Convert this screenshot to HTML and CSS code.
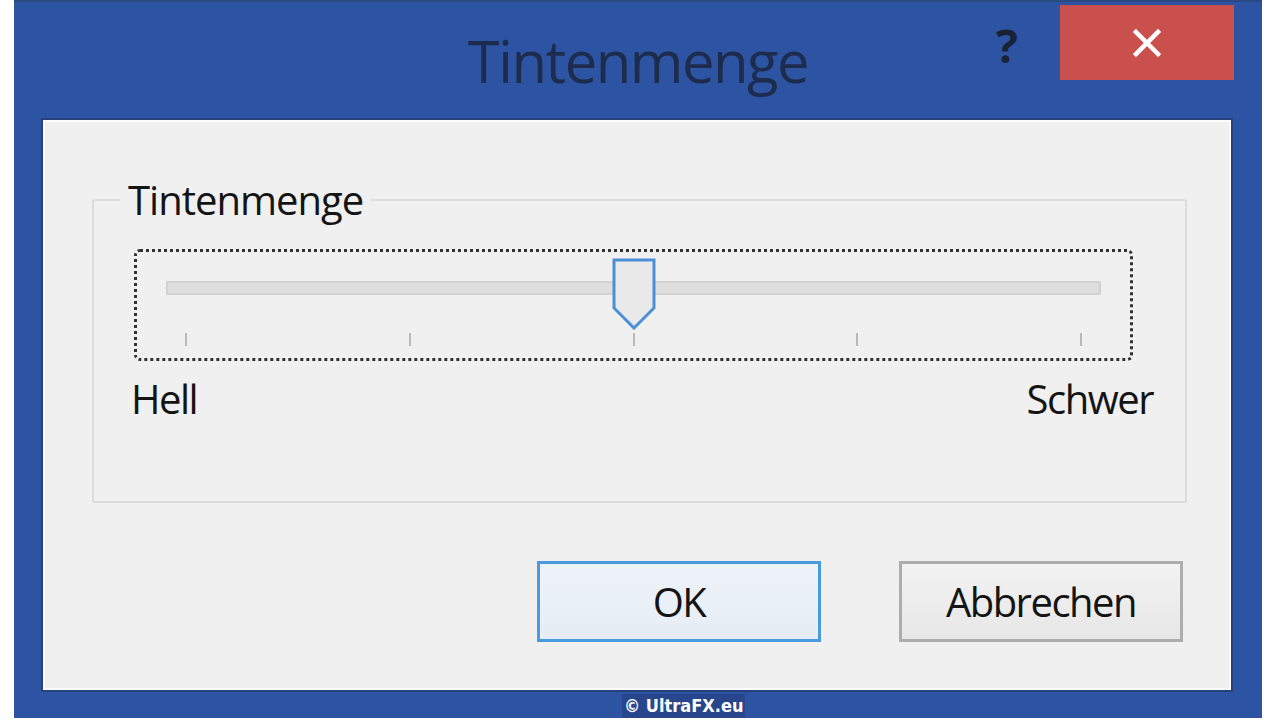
FILE: index.html
```html
<!DOCTYPE html>
<html lang="de">
<head>
<meta charset="utf-8">
<title>Tintenmenge</title>
<link rel="stylesheet" href="styles.css">
</head>
<body>
<div class="window">
  <div class="titlebar">
    <div class="tb-side"></div>
    <div class="title">Tintenmenge</div>
    <div class="tb-side tb-right">
      <span class="help">?</span>
      <div class="close">
        <svg width="34" height="34" viewBox="0 0 34 34"><path d="M6 6 L28 28 M28 6 L6 28" stroke="#fff" stroke-width="4.5" stroke-linecap="square"/></svg>
      </div>
    </div>
  </div>
  <div class="client">
    <fieldset class="group">
      <legend class="legend">Tintenmenge</legend>
      <div class="slider">
        <div class="track-row">
          <div class="track"></div>
          <svg class="thumb" width="44" height="72" viewBox="0 0 44 72"><path d="M2 2 H42 V50 L22 70 L2 50 Z" fill="#e9e9e9" stroke="#4a8fd8" stroke-width="3" stroke-linejoin="miter"/></svg>
        </div>
        <div class="ticks">
          <span class="tick"></span><span class="tick"></span><span class="tick"></span><span class="tick"></span><span class="tick"></span>
        </div>
      </div>
      <div class="scale-labels">
        <span>Hell</span>
        <span>Schwer</span>
      </div>
    </fieldset>
    <div class="buttons">
      <button class="btn btn-default">OK</button>
      <button class="btn">Abbrechen</button>
    </div>
  </div>
  <div class="bottom-strip">
    <span class="watermark">© UltraFX.eu</span>
  </div>
</div>
</body>
</html>
```
FILE: styles.css
```css
html, body {
  margin: 0;
  padding: 0;
  background: #ffffff;
  width: 1280px;
  height: 720px;
  overflow: hidden;
}
body {
  font-family: "Open Sans", "Noto Sans", sans-serif;
}
.window {
  margin-left: 14px;
  width: 1248px;
  height: 718px;
  background: #2d54a3;
  border-top: 2px solid #2a4882;
  box-sizing: border-box;
  display: flex;
  flex-direction: column;
}
.titlebar {
  height: 118px;
  flex: none;
  display: grid;
  grid-template-columns: 1fr auto 1fr;
  align-items: start;
}
.title {
  font-size: 58px;
  line-height: 1;
  color: #1d2b4d;
  margin-top: 30px;
  letter-spacing: -1.5px;
}
.tb-right {
  display: flex;
  justify-content: flex-end;
  align-items: flex-start;
  padding-right: 28px;
}
.help {
  font-size: 46px;
  font-weight: 700;
  color: #1a2236;
  line-height: 1;
  margin-top: 20px;
  margin-right: 42px;
}
.close {
  width: 174px;
  height: 75px;
  margin-top: 3px;
  background: #c9504c;
  display: flex;
  align-items: center;
  justify-content: center;
}
.client {
  flex: none;
  margin-left: 29px;
  width: 1188px;
  height: 570px;
  box-sizing: border-box;
  background: #f0f0f0;
  border: 2px solid #fbfbfb;
  box-shadow: 0 0 0 2px #25427f;
  padding: 0 0 0 47px;
}
.group {
  margin: 58px 0 0 0;
  padding: 0;
  width: 1095px;
  height: 323px;
  box-sizing: border-box;
  border: 2px solid #dcdcdc;
  border-radius: 2px;
}
.legend {
  font-size: 40px;
  color: #141414;
  margin-left: 26px;
  padding: 0 8px;
  line-height: 40px;
  letter-spacing: -1px;
}
.slider {
  margin: 29px 0 0 40px;
  width: 999px;
  height: 112px;
  box-sizing: border-box;
  border: 3px dotted #333333;
  border-radius: 6px;
  display: flex;
  flex-direction: column;
}
.track-row {
  position: relative;
  margin: 29px 29px 0 29px;
  height: 14px;
}
.track {
  height: 14px;
  box-sizing: border-box;
  background: #dedede;
  border: 2px solid #d2d2d2;
}
.thumb {
  position: absolute;
  left: 50%;
  top: -23px;
  margin-left: -22px;
}
.ticks {
  margin-top: 38px;
  padding: 0 48px;
  display: flex;
  justify-content: space-between;
}
.tick {
  width: 2px;
  height: 13px;
  background: #b9b9b9;
}
.scale-labels {
  display: flex;
  justify-content: space-between;
  margin: 14px 32px 0 37px;
  font-size: 40px;
  color: #141414;
  line-height: 48px;
  letter-spacing: -1.5px;
}
.buttons {
  display: flex;
  justify-content: flex-end;
  gap: 78px;
  margin-top: 58px;
  padding-right: 46px;
}
.btn {
  width: 284px;
  height: 81px;
  font-family: "Open Sans", "Noto Sans", sans-serif;
  font-size: 40px;
  color: #141414;
  letter-spacing: -1.5px;
  background: linear-gradient(#f2f2f2, #e7e7e7);
  border: 3px solid #adadad;
  padding: 0;
}
.btn-default {
  border-color: #4a9ae0;
  background: linear-gradient(#eef3f8, #e5edf5);
}
.bottom-strip {
  flex: 1;
  display: flex;
  align-items: flex-end;
  padding-left: 608px;
}
.watermark {
  background: #27468c;
  color: #ffffff;
  font-family: "DejaVu Sans Condensed", "DejaVu Sans", sans-serif;
  font-stretch: condensed;
  font-weight: 700;
  font-size: 18px;
  line-height: 24px;
  padding: 0 2px;
}
```
